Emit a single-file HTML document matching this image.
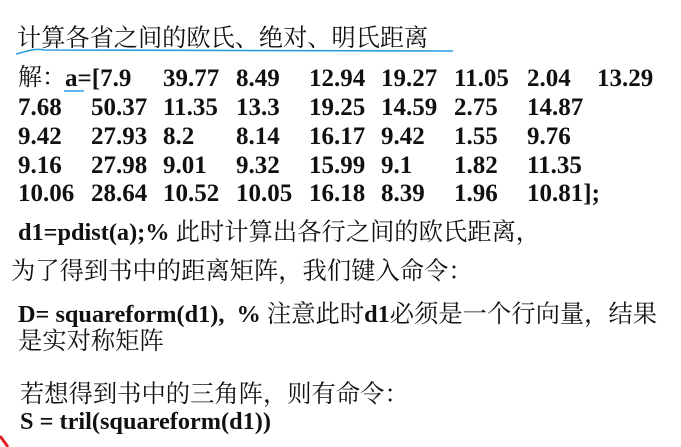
<!DOCTYPE html>
<html><head><meta charset="utf-8"><style>
body{margin:0;width:681px;height:447px;background:#fff;position:relative;overflow:hidden;font-family:"Liberation Serif","Noto Serif CJK SC",serif;color:#111}
.t{position:absolute;white-space:nowrap;line-height:1}
.n{position:absolute;font-weight:bold;font-size:25px;line-height:1;white-space:nowrap}
.c{font-size:24.3px}
b{font-weight:bold}
</style></head><body>
<div class="t" style="left:17px;top:27px;font-size:24.2px">计算各省之间的欧氏、绝对、明氏距离</div>
<svg style="position:absolute;left:0;top:0" width="681" height="447">
<path d="M16 54 C28 51 34 48 44 50 L453 51" stroke="#2a9ee0" stroke-width="1.6" fill="none"/>
<path d="M64 91 L84 91" stroke="#2a9ee0" stroke-width="1.6" fill="none"/>
<path d="M0 436 L8 447" stroke="#e02020" stroke-width="3" fill="none"/>
</svg>
<div class="t" style="left:18px;top:66px;font-size:24px">解：</div>
<div class="n" style="left:65px;top:66px">a=[7.9</div>
<div class="n" style="left:163px;top:66px">39.77</div><div class="n" style="left:236px;top:66px">8.49</div><div class="n" style="left:309px;top:66px">12.94</div><div class="n" style="left:381px;top:66px">19.27</div><div class="n" style="left:454px;top:66px">11.05</div><div class="n" style="left:527px;top:66px">2.04</div><div class="n" style="left:597px;top:66px">13.29</div>
<div class="n" style="left:18px;top:95px">7.68</div><div class="n" style="left:91px;top:95px">50.37</div><div class="n" style="left:163px;top:95px">11.35</div><div class="n" style="left:236px;top:95px">13.3</div><div class="n" style="left:309px;top:95px">19.25</div><div class="n" style="left:381px;top:95px">14.59</div><div class="n" style="left:454px;top:95px">2.75</div><div class="n" style="left:527px;top:95px">14.87</div>
<div class="n" style="left:18px;top:124px">9.42</div><div class="n" style="left:91px;top:124px">27.93</div><div class="n" style="left:163px;top:124px">8.2</div><div class="n" style="left:236px;top:124px">8.14</div><div class="n" style="left:309px;top:124px">16.17</div><div class="n" style="left:381px;top:124px">9.42</div><div class="n" style="left:454px;top:124px">1.55</div><div class="n" style="left:527px;top:124px">9.76</div>
<div class="n" style="left:18px;top:153px">9.16</div><div class="n" style="left:91px;top:153px">27.98</div><div class="n" style="left:163px;top:153px">9.01</div><div class="n" style="left:236px;top:153px">9.32</div><div class="n" style="left:309px;top:153px">15.99</div><div class="n" style="left:381px;top:153px">9.1</div><div class="n" style="left:454px;top:153px">1.82</div><div class="n" style="left:527px;top:153px">11.35</div>
<div class="n" style="left:18px;top:181px">10.06</div><div class="n" style="left:91px;top:181px">28.64</div><div class="n" style="left:163px;top:181px">10.52</div><div class="n" style="left:236px;top:181px">10.05</div><div class="n" style="left:309px;top:181px">16.18</div><div class="n" style="left:381px;top:181px">8.39</div><div class="n" style="left:454px;top:181px">1.96</div><div class="n" style="left:527px;top:181px">10.81];</div>
<div class="t c" style="left:18px;top:221px"><b>d1=pdist(a);%</b> 此时计算出各行之间的欧氏距离，</div>
<div class="t c" style="left:11px;top:260px">为了得到书中的距离矩阵，我们键入命令：</div>
<div class="t c" style="left:18px;top:303px"><b>D= squareform(d1),&nbsp; %</b> 注意此时<b>d1</b>必须是一个行向量，结果</div>
<div class="t c" style="left:18px;top:330px">是实对称矩阵</div>
<div class="t c" style="left:20px;top:383px">若想得到书中的三角阵，则有命令：</div>
<div class="t c" style="left:20px;top:410px"><b>S = tril(squareform(d1))</b></div>
</body></html>
